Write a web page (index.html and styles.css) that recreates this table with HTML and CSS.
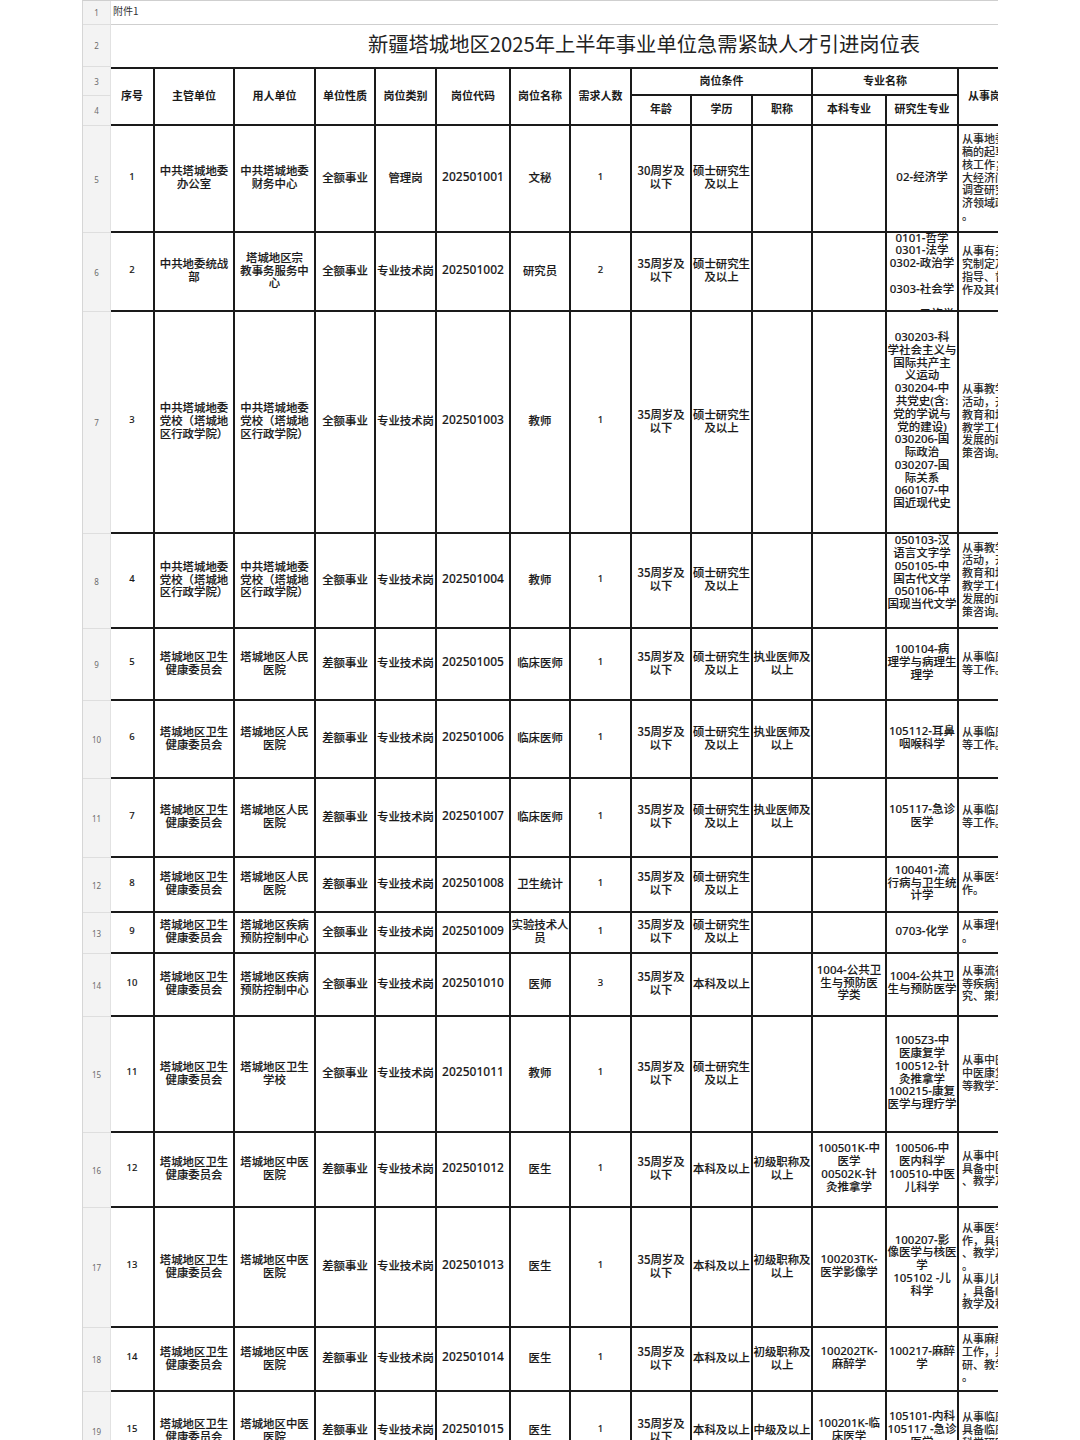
FILE: index.html
```html
<!DOCTYPE html>
<html lang="zh-CN">
<head>
<meta charset="utf-8">
<title>新疆塔城地区2025年上半年事业单位急需紧缺人才引进岗位表</title>
<link rel="stylesheet" href="styles.css">
</head>
<body>
<div class="viewport">
<div class="sheet">
  <!-- row 1 -->
  <div class="rn r1">1</div>
  <div class="note">附件1</div>
  <!-- row 2 -->
  <div class="rn">2</div>
  <div class="title">新疆塔城地区2025年上半年事业单位急需紧缺人才引进岗位表</div>
  <!-- row 3 -->
  <div class="rn">3</div>
  <div class="h hl s2">序号</div>
  <div class="h s2">主管单位</div>
  <div class="h s2">用人单位</div>
  <div class="h s2">单位性质</div>
  <div class="h s2">岗位类别</div>
  <div class="h s2">岗位代码</div>
  <div class="h s2">岗位名称</div>
  <div class="h s2">需求人数</div>
  <div class="h c3">岗位条件</div>
  <div class="h c2">专业名称</div>
  <div class="h s2">从事岗位主要职责</div>
  <!-- row 4 -->
  <div class="rn">4</div>
  <div class="h sub">年龄</div>
  <div class="h sub">学历</div>
  <div class="h sub">职称</div>
  <div class="h sub">本科专业</div>
  <div class="h sub">研究生专业</div>

  <!-- row 5 -->
  <div class="rn">5</div>
  <div class="d hl n">1</div>
  <div class="d">中共塔城地委<br>办公室</div>
  <div class="d">中共塔城地委<br>财务中心</div>
  <div class="d">全额事业</div>
  <div class="d">管理岗</div>
  <div class="d code">202501001</div>
  <div class="d">文秘</div>
  <div class="d n">1</div>
  <div class="d">30周岁及<br>以下</div>
  <div class="d">硕士研究生<br>及以上</div>
  <div class="d"></div>
  <div class="d"></div>
  <div class="d major">02-经济学</div>
  <div class="d duty">从事地委文件文<br>稿的起草、审<br>核工作；参与重<br>大经济问题的<br>调查研究和经<br>济领域政策研究<br>。</div>

  <!-- row 6 -->
  <div class="rn">6</div>
  <div class="d hl n">2</div>
  <div class="d">中共地委统战<br>部</div>
  <div class="d">塔城地区宗<br>教事务服务中<br>心</div>
  <div class="d">全额事业</div>
  <div class="d">专业技术岗</div>
  <div class="d code">202501002</div>
  <div class="d">研究员</div>
  <div class="d n">2</div>
  <div class="d">35周岁及<br>以下</div>
  <div class="d">硕士研究生<br>及以上</div>
  <div class="d"></div>
  <div class="d"></div>
  <div class="d major">&nbsp;<br>0101-哲学<br>0301-法学<br>0302-政治学<br>&nbsp;<br>0303-社会学<br>&nbsp;<br>0304-民族学</div>
  <div class="d duty">从事有关政策研<br>究制定及实施<br>指导、督促工<br>作及其他事务</div>

  <!-- row 7 -->
  <div class="rn">7</div>
  <div class="d hl n">3</div>
  <div class="d">中共塔城地委<br>党校（塔城地<br>区行政学院）</div>
  <div class="d">中共塔城地委<br>党校（塔城地<br>区行政学院）</div>
  <div class="d">全额事业</div>
  <div class="d">专业技术岗</div>
  <div class="d code">202501003</div>
  <div class="d">教师</div>
  <div class="d n">1</div>
  <div class="d">35周岁及<br>以下</div>
  <div class="d">硕士研究生<br>及以上</div>
  <div class="d"></div>
  <div class="d"></div>
  <div class="d major">030203-科<br>学社会主义与<br>国际共产主<br>义运动<br>030204-中<br>共党史(含:<br>党的学说与<br>党的建设)<br>030206-国<br>际政治<br>030207-国<br>际关系<br>060107-中<br>国近现代史</div>
  <div class="d duty">从事教学科研<br>活动，开展干部<br>教育和培训等<br>教学工作，为<br>发展的政策决<br>策咨询。</div>

  <!-- row 8 -->
  <div class="rn">8</div>
  <div class="d hl n">4</div>
  <div class="d">中共塔城地委<br>党校（塔城地<br>区行政学院）</div>
  <div class="d">中共塔城地委<br>党校（塔城地<br>区行政学院）</div>
  <div class="d">全额事业</div>
  <div class="d">专业技术岗</div>
  <div class="d code">202501004</div>
  <div class="d">教师</div>
  <div class="d n">1</div>
  <div class="d">35周岁及<br>以下</div>
  <div class="d">硕士研究生<br>及以上</div>
  <div class="d"></div>
  <div class="d"></div>
  <div class="d major">050103-汉<br>语言文字学<br>050105-中<br>国古代文学<br>050106-中<br>国现当代文学<br>&nbsp;</div>
  <div class="d duty">从事教学科研<br>活动，开展干部<br>教育和培训等<br>教学工作，为<br>发展的政策决<br>策咨询。</div>

  <!-- row 9 -->
  <div class="rn">9</div>
  <div class="d hl n">5</div>
  <div class="d">塔城地区卫生<br>健康委员会</div>
  <div class="d">塔城地区人民<br>医院</div>
  <div class="d">差额事业</div>
  <div class="d">专业技术岗</div>
  <div class="d code">202501005</div>
  <div class="d">临床医师</div>
  <div class="d n">1</div>
  <div class="d">35周岁及<br>以下</div>
  <div class="d">硕士研究生<br>及以上</div>
  <div class="d">执业医师及<br>以上</div>
  <div class="d"></div>
  <div class="d major">100104-病<br>理学与病理生<br>理学</div>
  <div class="d duty">从事临床诊疗<br>等工作。</div>

  <!-- row 10 -->
  <div class="rn">10</div>
  <div class="d hl n">6</div>
  <div class="d">塔城地区卫生<br>健康委员会</div>
  <div class="d">塔城地区人民<br>医院</div>
  <div class="d">差额事业</div>
  <div class="d">专业技术岗</div>
  <div class="d code">202501006</div>
  <div class="d">临床医师</div>
  <div class="d n">1</div>
  <div class="d">35周岁及<br>以下</div>
  <div class="d">硕士研究生<br>及以上</div>
  <div class="d">执业医师及<br>以上</div>
  <div class="d"></div>
  <div class="d major">105112-耳鼻<br>咽喉科学</div>
  <div class="d duty">从事临床诊疗<br>等工作。</div>

  <!-- row 11 -->
  <div class="rn">11</div>
  <div class="d hl n">7</div>
  <div class="d">塔城地区卫生<br>健康委员会</div>
  <div class="d">塔城地区人民<br>医院</div>
  <div class="d">差额事业</div>
  <div class="d">专业技术岗</div>
  <div class="d code">202501007</div>
  <div class="d">临床医师</div>
  <div class="d n">1</div>
  <div class="d">35周岁及<br>以下</div>
  <div class="d">硕士研究生<br>及以上</div>
  <div class="d">执业医师及<br>以上</div>
  <div class="d"></div>
  <div class="d major">105117-急诊<br>医学</div>
  <div class="d duty">从事临床诊疗<br>等工作。</div>

  <!-- row 12 -->
  <div class="rn">12</div>
  <div class="d hl n">8</div>
  <div class="d">塔城地区卫生<br>健康委员会</div>
  <div class="d">塔城地区人民<br>医院</div>
  <div class="d">差额事业</div>
  <div class="d">专业技术岗</div>
  <div class="d code">202501008</div>
  <div class="d">卫生统计</div>
  <div class="d n">1</div>
  <div class="d">35周岁及<br>以下</div>
  <div class="d">硕士研究生<br>及以上</div>
  <div class="d"></div>
  <div class="d"></div>
  <div class="d major">100401-流<br>行病与卫生统<br>计学</div>
  <div class="d duty">从事医学统计工<br>作。</div>

  <!-- row 13 -->
  <div class="rn">13</div>
  <div class="d hl n">9</div>
  <div class="d">塔城地区卫生<br>健康委员会</div>
  <div class="d">塔城地区疾病<br>预防控制中心</div>
  <div class="d">全额事业</div>
  <div class="d">专业技术岗</div>
  <div class="d code">202501009</div>
  <div class="d">实验技术人<br>员</div>
  <div class="d n">1</div>
  <div class="d">35周岁及<br>以下</div>
  <div class="d">硕士研究生<br>及以上</div>
  <div class="d"></div>
  <div class="d"></div>
  <div class="d major">0703-化学</div>
  <div class="d duty">从事理化检验工作<br>。</div>

  <!-- row 14 -->
  <div class="rn">14</div>
  <div class="d hl n">10</div>
  <div class="d">塔城地区卫生<br>健康委员会</div>
  <div class="d">塔城地区疾病<br>预防控制中心</div>
  <div class="d">全额事业</div>
  <div class="d">专业技术岗</div>
  <div class="d code">202501010</div>
  <div class="d">医师</div>
  <div class="d n">3</div>
  <div class="d">35周岁及<br>以下</div>
  <div class="d">本科及以上</div>
  <div class="d"></div>
  <div class="d major">1004-公共卫<br>生与预防医<br>学类</div>
  <div class="d major">1004-公共卫<br>生与预防医学</div>
  <div class="d duty">从事流行病学<br>等疾病预防控<br>究、策划工作</div>

  <!-- row 15 -->
  <div class="rn">15</div>
  <div class="d hl n">11</div>
  <div class="d">塔城地区卫生<br>健康委员会</div>
  <div class="d">塔城地区卫生<br>学校</div>
  <div class="d">全额事业</div>
  <div class="d">专业技术岗</div>
  <div class="d code">202501011</div>
  <div class="d">教师</div>
  <div class="d n">1</div>
  <div class="d">35周岁及<br>以下</div>
  <div class="d">硕士研究生<br>及以上</div>
  <div class="d"></div>
  <div class="d"></div>
  <div class="d major">1005Z3-中<br>医康复学<br>100512-针<br>灸推拿学<br>100215-康复<br>医学与理疗学</div>
  <div class="d duty">从事中医康复、<br>中医康复治疗<br>等教学工作。</div>

  <!-- row 16 -->
  <div class="rn">16</div>
  <div class="d hl n">12</div>
  <div class="d">塔城地区卫生<br>健康委员会</div>
  <div class="d">塔城地区中医<br>医院</div>
  <div class="d">差额事业</div>
  <div class="d">专业技术岗</div>
  <div class="d code">202501012</div>
  <div class="d">医生</div>
  <div class="d n">1</div>
  <div class="d">35周岁及<br>以下</div>
  <div class="d">本科及以上</div>
  <div class="d">初级职称及<br>以上</div>
  <div class="d major">100501K-中<br>医学<br>00502K-针<br>灸推拿学</div>
  <div class="d major">100506-中<br>医内科学<br>100510-中医<br>儿科学</div>
  <div class="d duty">从事中医临床<br>具备中医临床<br>、教学及科研</div>

  <!-- row 17 -->
  <div class="rn">17</div>
  <div class="d hl n">13</div>
  <div class="d">塔城地区卫生<br>健康委员会</div>
  <div class="d">塔城地区中医<br>医院</div>
  <div class="d">差额事业</div>
  <div class="d">专业技术岗</div>
  <div class="d code">202501013</div>
  <div class="d">医生</div>
  <div class="d n">1</div>
  <div class="d">35周岁及<br>以下</div>
  <div class="d">本科及以上</div>
  <div class="d">初级职称及<br>以上</div>
  <div class="d major">100203TK-<br>医学影像学</div>
  <div class="d major">100207-影<br>像医学与核医<br>学<br>105102 -儿<br>科学</div>
  <div class="d duty">从事医学影像工<br>作，具备临床<br>、教学及科研<br>。<br>从事儿科临床<br>，具备临床<br>教学及科研</div>

  <!-- row 18 -->
  <div class="rn">18</div>
  <div class="d hl n">14</div>
  <div class="d">塔城地区卫生<br>健康委员会</div>
  <div class="d">塔城地区中医<br>医院</div>
  <div class="d">差额事业</div>
  <div class="d">专业技术岗</div>
  <div class="d code">202501014</div>
  <div class="d">医生</div>
  <div class="d n">1</div>
  <div class="d">35周岁及<br>以下</div>
  <div class="d">本科及以上</div>
  <div class="d">初级职称及<br>以上</div>
  <div class="d major">100202TK-<br>麻醉学</div>
  <div class="d major">100217-麻醉<br>学</div>
  <div class="d duty">从事麻醉临床<br>工作，具备科<br>研、教学工作<br>。</div>

  <!-- row 19 -->
  <div class="rn">19</div>
  <div class="d hl n">15</div>
  <div class="d">塔城地区卫生<br>健康委员会</div>
  <div class="d">塔城地区中医<br>医院</div>
  <div class="d">差额事业</div>
  <div class="d">专业技术岗</div>
  <div class="d code">202501015</div>
  <div class="d">医生</div>
  <div class="d n">1</div>
  <div class="d">35周岁及<br>以下</div>
  <div class="d">本科及以上</div>
  <div class="d">中级及以上</div>
  <div class="d major">100201K-临<br>床医学</div>
  <div class="d major">105101-内科<br>105117 -急诊<br>医学</div>
  <div class="d duty">从事临床诊疗<br>具备临床教学<br>科学研究工作</div>
</div>
</div>
</body>
</html>
```

FILE: styles.css
```css
html, body {
  margin: 0;
  padding: 0;
  background: #ffffff;
}

body {
  font-family: "Noto Sans CJK SC", "Noto Sans", sans-serif;
  color: #1c1c1c;
}

.viewport {
  width: 916px;
  margin-left: 82px;
  overflow: hidden;
  height: 1440px;
}

.sheet {
  display: grid;
  width: 984px;
  grid-template-columns: 28px 44px 80px 81px 60px 61px 74px 60px 61px 60px 61px 60px 74px 72px 108px;
  grid-template-rows: 24px 42px 29px 30px 107px 79px 222px 95px 72px 78px 79px 55px 41px 63px 116px 75px 120px 64px 80px;
  border-top: 1px solid #cfcfcf;
  border-left: 1px solid #d6d6d6;
}

.sheet > div {
  box-sizing: border-box;
  min-width: 0;
  min-height: 0;
}

/* row number column */
.rn {
  grid-column: 1;
  background: #f3f3f3;
  border-bottom: 1px solid #dedede;
  border-right: 1px solid #e2e2e2;
  color: #6b6b6b;
  font-family: "Noto Sans", sans-serif;
  font-size: 8px;
  display: flex;
  align-items: center;
  justify-content: center;
}

.note {
  grid-column: span 14;
  border-bottom: 1px solid #cfcfcf;
  font-size: 10px;
  color: #333;
  display: flex;
  align-items: center;
  padding-left: 2px;
  padding-bottom: 4px;
}

.title {
  grid-column: span 14;
  display: flex;
  align-items: center;
  padding-left: 257px;
  padding-bottom: 6px;
  font-size: 20.3px;
  color: #222;
  white-space: nowrap;
}

/* header cells */
.h {
  border-right: 2px solid #1a1a1a;
  border-bottom: 2px solid #1a1a1a;
  display: flex;
  align-items: center;
  justify-content: center;
  padding-bottom: 4px;
  font-size: 11px;
  font-weight: bold;
  color: #1a1a1a;
  white-space: nowrap;
  overflow: hidden;
}

.h.s2 {
  grid-row: span 2;
  border-top: 2px solid #1a1a1a;
}

.h.c3 {
  grid-column: span 3;
  border-top: 2px solid #1a1a1a;
}

.h.c2 {
  grid-column: span 2;
  border-top: 2px solid #1a1a1a;
}

/* data cells */
.d {
  border-right: 2px solid #1a1a1a;
  border-bottom: 2px solid #1a1a1a;
  display: flex;
  align-items: center;
  justify-content: center;
  padding-bottom: 3px;
  text-align: center;
  white-space: nowrap;
  overflow: hidden;
  font-size: 11.4px;
  line-height: 12.8px;
  font-weight: 500;
  color: #1a1a1a;
  -webkit-text-stroke: 0.15px #1a1a1a;
}

.d.n {
  font-family: "Noto Sans", sans-serif;
  font-size: 9.5px;
  -webkit-text-stroke: 0.1px #1a1a1a;
}

.d.code {
  font-family: "Noto Sans", "Noto Sans CJK SC", sans-serif;
  font-size: 12px;
  -webkit-text-stroke: 0.1px #1a1a1a;
}

.d.major {
  font-family: "Noto Sans", "Noto Sans CJK SC", sans-serif;
  font-size: 11.5px;
  line-height: 12.8px;
  -webkit-text-stroke: 0.1px #1a1a1a;
}

.d.duty {
  justify-content: flex-start;
  text-align: left;
  padding-left: 3px;
  font-size: 11px;
  color: #2b2b2b;
  -webkit-text-stroke: 0.05px #2b2b2b;
}
```
